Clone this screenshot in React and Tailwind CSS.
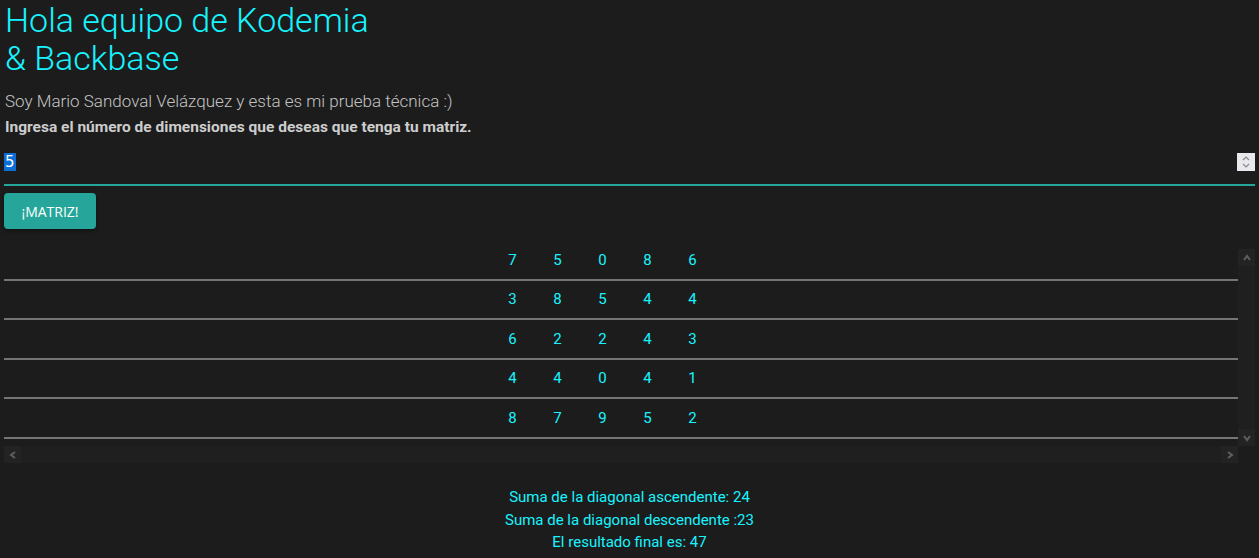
const matrix = [
  [7, 5, 0, 8, 6],
  [3, 8, 5, 4, 4],
  [6, 2, 2, 4, 3],
  [4, 4, 0, 4, 1],
  [8, 7, 9, 5, 2],
]

function Chevron({ dir }) {
  const d = {
    up: 'M3 8 L6 4 L9 8',
    down: 'M3 4 L6 8 L9 4',
    left: 'M8 3 L4 6 L8 9',
    right: 'M4 3 L8 6 L4 9',
  }[dir]
  return (
    <svg width="12" height="12" viewBox="0 0 12 12">
      <path d={d} fill="none" stroke="#5f5f5f" strokeWidth="2" />
    </svg>
  )
}

function MatrixTable() {
  return (
    <div className="mx-1 mt-5 grid grid-cols-[1fr_17px] grid-rows-[197px_17px]">
      <div className="overflow-hidden">
        <div className="-mt-[8px]">
          {matrix.map((row, i) => (
            <div key={i} className="flex h-[39.5px] items-center border-b-2 border-[#757575] pl-[486px]">
              {row.map((n, j) => (
                <span key={j} className="w-[45px] text-center text-[15px] text-[#18f4ff]">
                  {n}
                </span>
              ))}
            </div>
          ))}
        </div>
      </div>
      <div className="flex flex-col justify-between bg-[#1f1f1f]">
        <div className="flex h-[17px] items-center justify-center bg-[#232323]">
          <Chevron dir="up" />
        </div>
        <div className="flex h-[17px] items-center justify-center bg-[#232323]">
          <Chevron dir="down" />
        </div>
      </div>
      <div className="flex justify-between bg-[#1f1f1f]">
        <div className="flex w-[17px] items-center justify-center bg-[#232323]">
          <Chevron dir="left" />
        </div>
        <div className="flex w-[17px] items-center justify-center bg-[#232323]">
          <Chevron dir="right" />
        </div>
      </div>
      <div className="bg-[#1c1c1c]" />
    </div>
  )
}

export default function App() {
  return (
    <div className="min-h-[558px] bg-[#1c1c1c] font-['Roboto',sans-serif]">
      <h1 className="px-[5px] pt-[1px] text-[34px] font-light leading-[38px] text-[#18f4ff]">
        Hola equipo de Kodemia
        <br />& Backbase
      </h1>
      <p className="mt-[12px] px-[5px] text-[17px] font-light leading-6 text-[#c4c4c4]">
        Soy Mario Sandoval Velázquez y esta es mi prueba técnica :)
      </p>
      <p className="mt-[4px] px-[5px] text-[15.5px] font-bold leading-5 text-[#cdcdcd]">
        Ingresa el número de dimensiones que deseas que tenga tu matriz.
      </p>

      <div className="mx-1 mt-[12px] flex h-[37px] items-start justify-between border-b-2 border-[#26a69a] pt-[4px]">
        <span className="bg-[#0b6fd6] px-[1px] font-['DejaVu_Sans',sans-serif] text-[15px] leading-[18px] text-white">5</span>
        <div className="flex h-[18px] w-[18px] flex-col items-center justify-center bg-[#e9e9ed]">
          <svg width="10" height="14" viewBox="0 0 10 14">
            <path d="M2 5 L5 2 L8 5 M2 9 L5 12 L8 9" fill="none" stroke="#8a8a8a" strokeWidth="1.2" />
          </svg>
        </div>
      </div>

      <button className="ml-1 mt-[7px] h-9 w-[92px] rounded-sm bg-[#26a69a] font-['Open_Sans',sans-serif] text-[14px] text-white shadow-[0_2px_4px_rgba(0,0,0,0.4)]">
        ¡MATRIZ!
      </button>

      <MatrixTable />

      <div className="mt-[23px] text-center text-[15px] leading-[22.5px] text-[#18f4ff]">
        <p>Suma de la diagonal ascendente: 24</p>
        <p>Suma de la diagonal descendente :23</p>
        <p>El resultado final es: 47</p>
      </div>
    </div>
  )
}
